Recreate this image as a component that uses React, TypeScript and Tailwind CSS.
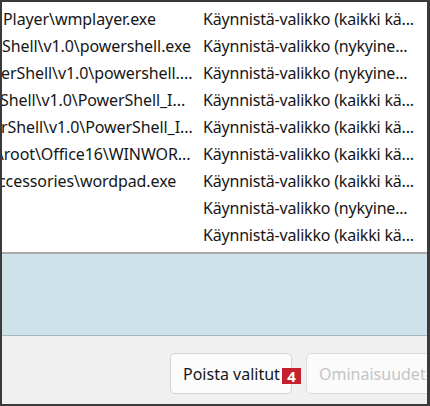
const ROWS = [
  { path: "Player\\wmplayer.exe", shift: "ml-[1px]", place: "Käynnistä-valikko (kaikki kä..." },
  { path: "Shell\\v1.0\\powershell.exe", shift: "ml-0", place: "Käynnistä-valikko (nykyine..." },
  { path: "erShell\\v1.0\\powershell....", shift: "-ml-[1px]", place: "Käynnistä-valikko (nykyine..." },
  { path: "Shell\\v1.0\\PowerShell_I...", shift: "-ml-[2px]", place: "Käynnistä-valikko (kaikki kä..." },
  { path: "rShell\\v1.0\\PowerShell_I...", shift: "-ml-[1px]", place: "Käynnistä-valikko (kaikki kä..." },
  { path: "\\root\\Office16\\WINWOR...", shift: "-ml-[4px]", place: "Käynnistä-valikko (kaikki kä..." },
  { path: "ccessories\\wordpad.exe", shift: "-ml-[4px]", place: "Käynnistä-valikko (kaikki kä..." },
  { path: "", shift: "ml-0", place: "Käynnistä-valikko (nykyine..." },
  { path: "", shift: "ml-0", place: "Käynnistä-valikko (kaikki kä..." },
];

export default function App() {
  return (
    <div
      className="flex h-[406px] w-[430px] flex-col overflow-hidden border-b-2 border-l-2 border-r-[3px] border-t-2 border-[#3a3a3a] bg-white text-[#161616]"
      style={{ fontFamily: '"Noto Sans", "Open Sans", sans-serif' }}
    >
      {/* list */}
      <div className="flex flex-col bg-white pb-[4px] pt-[3px]">
        {ROWS.map((row, i) => (
          <div key={i} className="flex h-[27px] items-center text-[16px]">
            <div className="w-[199px] overflow-hidden whitespace-nowrap tracking-[-0.08px]">
              <span className={`block ${row.shift}`}>{row.path || "\u00a0"}</span>
            </div>
            <div className="overflow-hidden whitespace-nowrap pl-[2px] tracking-[-0.2px]">{row.place}</div>
          </div>
        ))}
      </div>

      {/* preview area */}
      <div className="h-[84px] border-b border-t-2 border-b-[#aab6b9] border-t-[#a9a9a9] bg-[#cde3e9]" />

      {/* buttons */}
      <div className="flex flex-1 items-start gap-[14px] bg-[#f0f0f0] pl-[168px] pt-[17px]">
        <div className="relative">
          <button className="flex h-[41px] w-[122px] items-center rounded-[5px] border border-[#d4d4d4] bg-[#fcfcfc] pl-[12px] text-[16px] text-[#161616]">
            Poista valitut
          </button>
          <span className="absolute left-[112px] top-[15px] flex h-[16px] w-[19px] items-center justify-center bg-[#c61f30] text-[15px] font-bold leading-none text-white">
            4
          </span>
        </div>
        <button className="flex h-[41px] w-[140px] shrink-0 items-center rounded-[5px] border border-[#dcdcdc] bg-[#fbfbfb] pl-[12px] text-[16px] text-[#c4c4c4]">
          Ominaisuudet
        </button>
      </div>
    </div>
  );
}
